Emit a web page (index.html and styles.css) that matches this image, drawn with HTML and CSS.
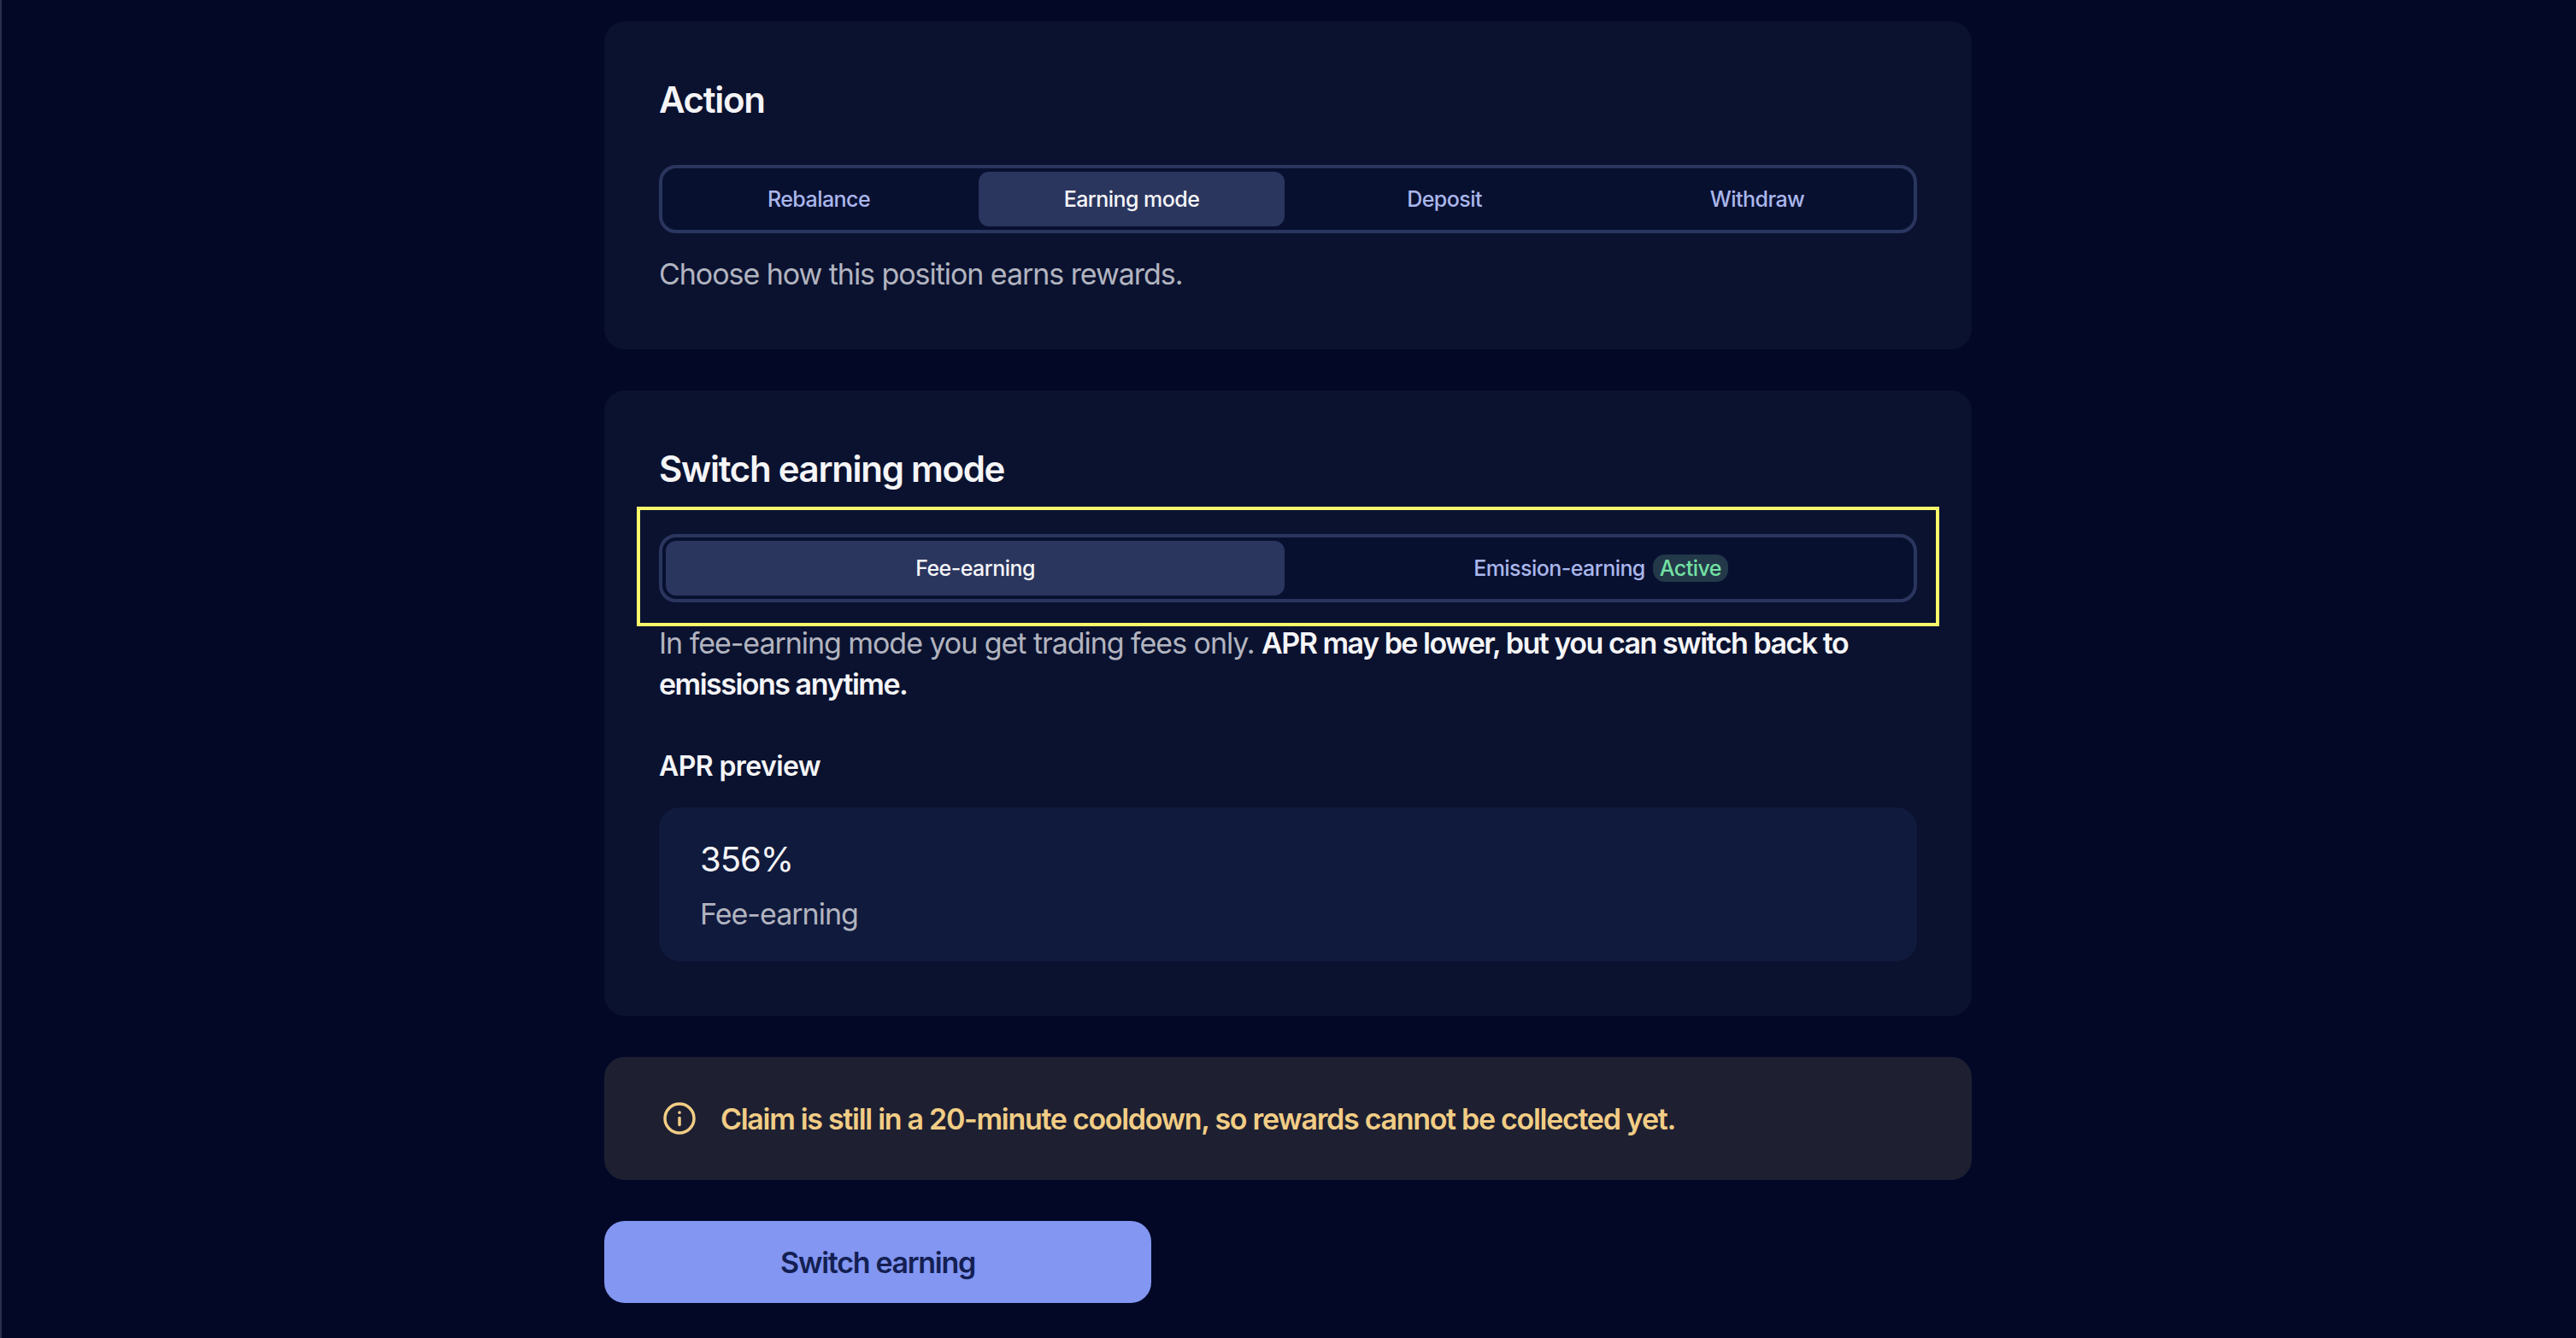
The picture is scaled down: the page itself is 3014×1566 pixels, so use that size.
FILE: index.html
```html
<!DOCTYPE html>
<html lang="en">
<head>
    <meta charset="UTF-8">
    <meta name="viewport" content="width=device-width, initial-scale=1.0">
    <title>Switch earning</title>
    <link rel="stylesheet" href="styles.css">
</head>
<body>
    <main class="container">
        <section class="card">
            <h2>Action</h2>
            <div class="tabs tabs-four">
                <button>Rebalance</button>
                <button class="active">Earning mode</button>
                <button>Deposit</button>
                <button>Withdraw</button>
            </div>
            <p class="hint">Choose how this position earns rewards.</p>
        </section>

        <section class="card">
            <h2>Switch earning mode</h2>
            <div class="tabs-wrap">
                <div class="tabs tabs-two">
                    <button class="active">Fee-earning</button>
                    <button>Emission-earning <span class="badge">Active</span></button>
                </div>
                <div class="highlight"></div>
            </div>
            <p class="hint">In fee-earning mode you get trading fees only. <strong>APR may be lower, but you can switch back to emissions anytime.</strong></p>
            <h3>APR preview</h3>
            <div class="preview">
                <div class="preview-value">356%</div>
                <div class="preview-label">Fee-earning</div>
            </div>
        </section>

        <div class="alert">
            <svg class="alert-icon" viewBox="0 0 24 24" fill="none" stroke="currentColor" stroke-width="1.75" stroke-linecap="round">
                <circle cx="12" cy="12" r="8.5"></circle>
                <path d="M12 11.8v4"></path>
                <path d="M12 8.5v.1"></path>
            </svg>
            <span>Claim is still in a 20-minute cooldown, so rewards cannot be collected yet.</span>
        </div>

        <button class="submit">Switch earning</button>
    </main>
</body>
</html>
```

FILE: styles.css
```css
* {
    box-sizing: border-box;
}
body {
    font-family: Inter, "Noto Sans", sans-serif;
    margin: 0;
    min-height: 1566px;
    background-color: #020826;
    box-shadow: inset 2px 0 0 #2a3050;
    color: #f5f5f7;
}
.container {
    width: 1600px;
    margin: 0 auto;
    padding-top: 25px;
    display: flex;
    flex-direction: column;
    gap: 48px;
}
.card {
    background-color: #0a1230;
    border-radius: 24px;
    padding: 64px;
}
h2 {
    margin: 0 0 48px;
    font-size: 42px;
    line-height: 56px;
    font-weight: 600;
    letter-spacing: -1.3px;
}
h3 {
    margin: 48px 0 24px;
    font-size: 32px;
    line-height: 48px;
    font-weight: 600;
    letter-spacing: -0.6px;
}
.tabs-wrap {
    position: relative;
}
.tabs {
    display: grid;
    gap: 8px;
    padding: 4px;
    height: 80px;
    border: 4px solid #2b365f;
    border-radius: 20px;
    background-color: #081030;
}
.tabs-four {
    grid-template-columns: repeat(4, 1fr);
}
.tabs-two {
    grid-template-columns: repeat(2, 1fr);
}
.tabs button {
    font-family: inherit;
    font-size: 25px;
    font-weight: 500;
    letter-spacing: -0.55px;
    background: none;
    border: none;
    border-radius: 12px;
    color: #aab7ec;
    display: flex;
    align-items: center;
    justify-content: center;
    gap: 9px;
}
.tabs button.active {
    background-color: #2b365f;
    color: #f5f5f7;
}
.badge {
    display: inline-flex;
    align-items: center;
    height: 32px;
    padding: 0 8px;
    border-radius: 14px;
    background-color: #23394a;
    color: #73e0a4;
}
.highlight {
    position: absolute;
    inset: -32px -26px -28px;
    border: 4px solid #f8f86b;
    pointer-events: none;
}
.hint {
    margin: 24px 0 0;
    font-size: 34px;
    line-height: 48px;
    color: #b2b4bf;
    letter-spacing: -1.05px;
}
.hint strong {
    color: #f5f5f7;
    font-weight: 600;
    letter-spacing: -1.5px;
}
.preview {
    background-color: #101a3d;
    border-radius: 24px;
    padding: 32px 48px;
    height: 180px;
}
.preview-value {
    font-size: 40px;
    line-height: 58px;
    letter-spacing: -1px;
    margin-bottom: 11px;
}
.preview-label {
    font-size: 34px;
    line-height: 48px;
    color: #b2b4bf;
    letter-spacing: -1px;
}
.alert {
    display: flex;
    align-items: center;
    gap: 24px;
    height: 144px;
    padding: 0 64px;
    background-color: #1e2032;
    border-radius: 24px;
    color: #f2cd85;
    font-size: 34px;
    font-weight: 600;
    letter-spacing: -1.3px;
}
.alert-icon {
    width: 48px;
    height: 48px;
    flex: none;
}
.submit {
    width: 640px;
    height: 96px;
    border: none;
    border-radius: 24px;
    background-color: #8296f2;
    color: #141f52;
    font-family: inherit;
    font-size: 34px;
    font-weight: 600;
    letter-spacing: -1.3px;
}
```
